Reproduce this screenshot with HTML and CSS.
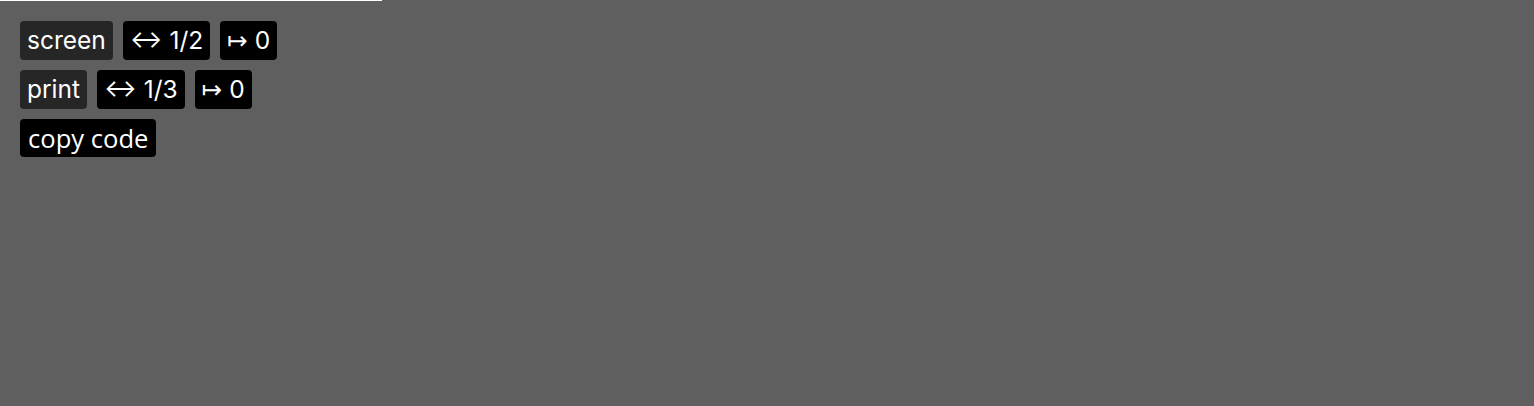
FILE: index.html
```html
<!DOCTYPE html>
<html>
<head>
<meta charset="utf-8">
<link rel="stylesheet" href="styles.css">
</head>
<body>
<div class="topline"></div>
<div class="panel">
  <div class="row">
    <span class="btn mode">screen</span>
    <span class="btn">↔ 1/2</span>
    <span class="btn">↦ 0</span>
  </div>
  <div class="row">
    <span class="btn mode">print</span>
    <span class="btn">↔ 1/3</span>
    <span class="btn">↦ 0</span>
  </div>
  <div class="row">
    <span class="btn copy">copy code</span>
  </div>
</div>
</body>
</html>
```
FILE: styles.css
```css
html, body {
  margin: 0;
  padding: 0;
  background: #5f5f5f;
  height: 100%;
}
.topline {
  width: 382px;
  height: 1px;
  background: #ffffff;
}
.panel {
  display: flex;
  flex-direction: column;
  align-items: flex-start;
  gap: 10px;
  padding: 20px 20px;
}
.row {
  display: flex;
  gap: 10px;
}
.btn {
  display: inline-block;
  background: #000;
  color: #fff;
  font-family: Inter, "DejaVu Sans", sans-serif;
  font-size: 24.5px;
  line-height: 29px;
  padding: 5px 7px 5px;
  border-radius: 4px;
  white-space: nowrap;
}
.btn.mode {
  background: #262626;
}
.btn.copy {
  font-family: "Open Sans", sans-serif;
  font-size: 25.6px;
  line-height: 35px;
  padding: 2px 8px 1px;
}
```
